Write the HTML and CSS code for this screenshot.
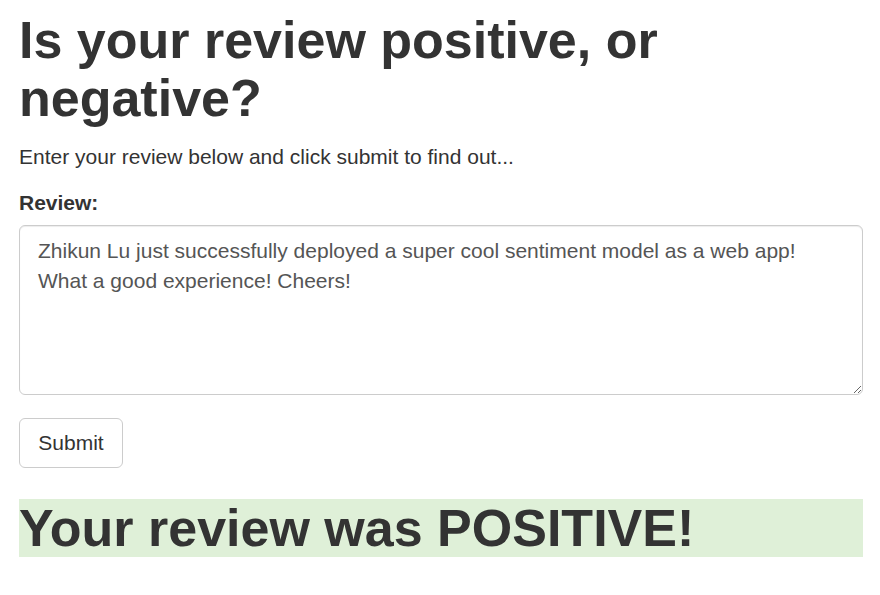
FILE: index.html
```html
<!DOCTYPE html>
<html lang="en">
<head>
<meta charset="utf-8">
<title>Sentiment</title>
<link rel="stylesheet" href="styles.css">
</head>
<body>
<main class="page">
  <h1 class="title">Is your review positive, or negative?</h1>
  <p class="lead">Enter your review below and click submit to find out...</p>
  <form class="review-form">
    <label class="field-label" for="review">Review:</label>
    <textarea id="review" class="field-input">Zhikun Lu just successfully deployed a super cool sentiment model as a web app! What a good experience! Cheers!</textarea>
    <button type="button" class="btn">Submit</button>
  </form>
  <h1 class="result">Your review was POSITIVE!</h1>
</main>
</body>
</html>
```

FILE: styles.css
```css
* { box-sizing: border-box; }
html, body { margin: 0; padding: 0; background: #fff; }
body {
  font-family: "Liberation Sans", Arial, Helvetica, sans-serif;
  color: #333;
  font-size: 21px;
  line-height: 30px;
}
.page {
  padding: 11px 17px 0 19px;
  display: flex;
  flex-direction: column;
}
.title {
  margin: 0;
  font-size: 52px;
  line-height: 58px;
  font-weight: bold;
  color: #333;
}
.lead {
  margin: 15px 0 0;
}
.review-form {
  display: flex;
  flex-direction: column;
  align-items: flex-start;
  margin-top: 16px;
}
.field-label {
  font-weight: bold;
}
.field-input {
  margin-top: 7px;
  width: 100%;
  height: 170px;
  border: 1px solid #ccc;
  border-radius: 6px;
  padding: 10px 18px;
  font-family: "Liberation Sans", Arial, Helvetica, sans-serif;
  font-size: 21px;
  line-height: 30px;
  color: #555;
  box-shadow: inset 0 1px 1px rgba(0,0,0,0.075);
}
.btn {
  margin-top: 23px;
  width: 104px;
  height: 50px;
  border: 1px solid #ccc;
  border-radius: 6px;
  background: #fff;
  font-family: "Liberation Sans", Arial, Helvetica, sans-serif;
  font-size: 21px;
  color: #333;
  padding: 0;
}
.result {
  margin: 31px 0 0;
  font-size: 52px;
  line-height: 58px;
  font-weight: bold;
  background: #dff0d8;
  color: #333;
}
```
